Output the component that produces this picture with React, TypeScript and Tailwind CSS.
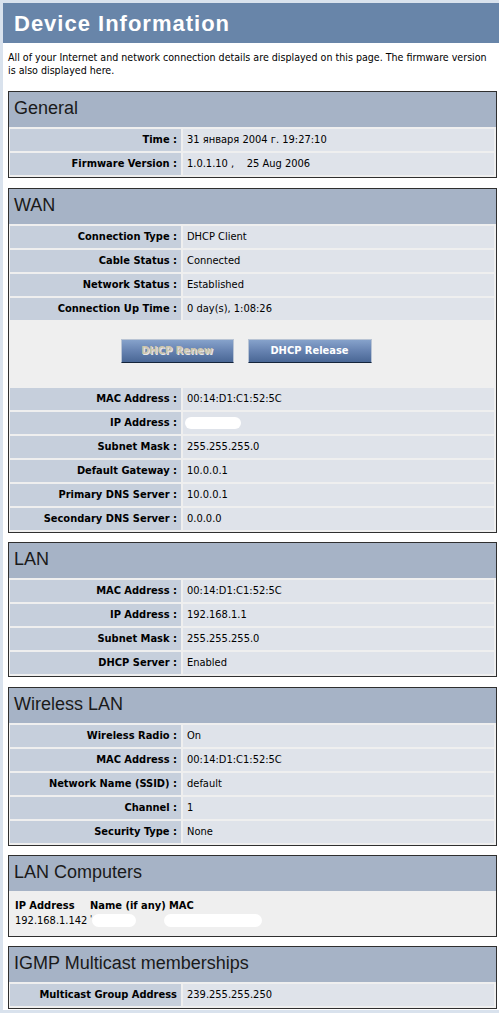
import React from "react";

const FONT = "font-['DejaVu_Sans_Condensed','Liberation_Sans',sans-serif]";

type RowProps = { label: string; value?: React.ReactNode; colon?: boolean };

function Row({ label, value, colon = true }: RowProps) {
  return (
    <div className="grid grid-cols-[171px_1fr] gap-[2px] h-[22px]">
      <div className="bg-[#c6cfdc] flex items-center justify-end pr-[4px] text-[11px] font-bold text-black whitespace-nowrap">
        {label}
        {colon ? " :" : ""}
      </div>
      <div className="bg-[#dfe3ea] flex items-center pl-[4px] text-[11px] text-black whitespace-nowrap">
        {value}
      </div>
    </div>
  );
}

function Box({ title, children, mb = "mb-[9px]" }: { title: string; children: React.ReactNode; mb?: string }) {
  return (
    <div className={"ml-[5px] mr-[2px] border border-[#2f2f2f] bg-[#efefef] " + mb}>
      <div className="h-[35px] bg-[#a6b3c6] flex items-center pl-[5px] pb-[3px] text-[18px] text-[#1a1a1a] font-['Liberation_Sans',sans-serif]">
        {title}
      </div>
      {children}
    </div>
  );
}

function Rows({ children }: { children: React.ReactNode }) {
  return <div className="flex flex-col gap-[2px] pl-[1px] pr-[2px] py-[2px]">{children}</div>;
}

function Blob({ w, h = 13 }: { w: number; h?: number }) {
  return (
    <span
      className="inline-block bg-white rounded-full blur-[0.6px] align-middle"
      style={{ width: w, height: h }}
    />
  );
}

function Btn({ label, disabled }: { label: string; disabled?: boolean }) {
  return (
    <div
      className={
        "h-[24px] flex items-center justify-center text-[11px] font-bold border border-[#b9c4d4] border-b-[#14243a] bg-gradient-to-b from-[#86a2cb] via-[#6682b0] to-[#4a6795] " +
        (disabled ? "text-[#cfc6ad] [text-shadow:1px_1px_0_#e8e8e8]" : "text-white")
      }
      style={{ width: disabled ? 113 : 124 }}
    >
      {label}
    </div>
  );
}

export default function App() {
  return (
    <div className={"w-[499px] h-[1013px] overflow-hidden bg-[#d9e2ed] pl-[3px] pt-[3px] " + FONT}>
      <div className="bg-white h-[1007px]">
        <div className="h-[40px] bg-[#6885a9] flex items-center pl-[11px] text-[22px] font-bold text-white font-['Liberation_Sans',sans-serif] tracking-[1px]">
          Device Information
        </div>
        <div className="px-[5px] pt-[8px] pb-[14px] text-[10.6px] leading-[13px] text-black whitespace-nowrap">
          All of your Internet and network connection details are displayed on this page. The firmware version
          <br />
          is also displayed here.
        </div>

        <Box title="General" mb="mb-[10px]">
          <Rows>
            <Row label="Time" value="31 января 2004 г. 19:27:10" />
            <Row label="Firmware Version" value={<span className="whitespace-pre">1.0.1.10 ,    25 Aug 2006</span>} />
          </Rows>
        </Box>

        <Box title="WAN">
          <Rows>
            <Row label="Connection Type" value="DHCP Client" />
            <Row label="Cable Status" value="Connected" />
            <Row label="Network Status" value="Established" />
            <Row label="Connection Up Time" value="0 day(s), 1:08:26" />
            <div className="h-[64px] flex items-start pt-[17px] justify-center gap-[14px] pr-[12px]">
              <Btn label="DHCP Renew" disabled />
              <Btn label="DHCP Release" />
            </div>
            <Row label="MAC Address" value="00:14:D1:C1:52:5C" />
            <Row label="IP Address" value={<span className="-ml-[2px]"><Blob w={56} h={12} /></span>} />
            <Row label="Subnet Mask" value="255.255.255.0" />
            <Row label="Default Gateway" value="10.0.0.1" />
            <Row label="Primary DNS Server" value="10.0.0.1" />
            <Row label="Secondary DNS Server" value="0.0.0.0" />
          </Rows>
        </Box>

        <Box title="LAN" mb="mb-[10px]">
          <Rows>
            <Row label="MAC Address" value="00:14:D1:C1:52:5C" />
            <Row label="IP Address" value="192.168.1.1" />
            <Row label="Subnet Mask" value="255.255.255.0" />
            <Row label="DHCP Server" value="Enabled" />
          </Rows>
        </Box>

        <Box title="Wireless LAN">
          <Rows>
            <Row label="Wireless Radio" value="On" />
            <Row label="MAC Address" value="00:14:D1:C1:52:5C" />
            <Row label="Network Name (SSID)" value="default" />
            <Row label="Channel" value="1" />
            <Row label="Security Type" value="None" />
          </Rows>
        </Box>

        <Box title="LAN Computers">
          <div className="pl-[6px] pt-[7px] pb-[8px] text-[11px] leading-[15px] text-black">
            <div className="grid grid-cols-[75px_79px_1fr] font-bold whitespace-nowrap">
              <span>IP Address</span>
              <span>Name (if any)</span>
              <span>MAC</span>
            </div>
            <div className="grid grid-cols-[75px_79px_1fr] whitespace-nowrap items-center">
              <span>192.168.1.142</span>
              <span className="flex items-center">
                <span className="text-[9px] leading-[9px] self-start mt-[1px]">'</span>
                <Blob w={44} h={13} />
              </span>
              <span className="flex items-center -ml-[5px]">
                <Blob w={98} h={13} />
              </span>
            </div>
          </div>
        </Box>

        <Box title="IGMP Multicast memberships" mb="mb-0">
          <Rows>
            <Row label="Multicast Group Address" value="239.255.255.250" colon={false} />
          </Rows>
        </Box>
      </div>
    </div>
  );
}
